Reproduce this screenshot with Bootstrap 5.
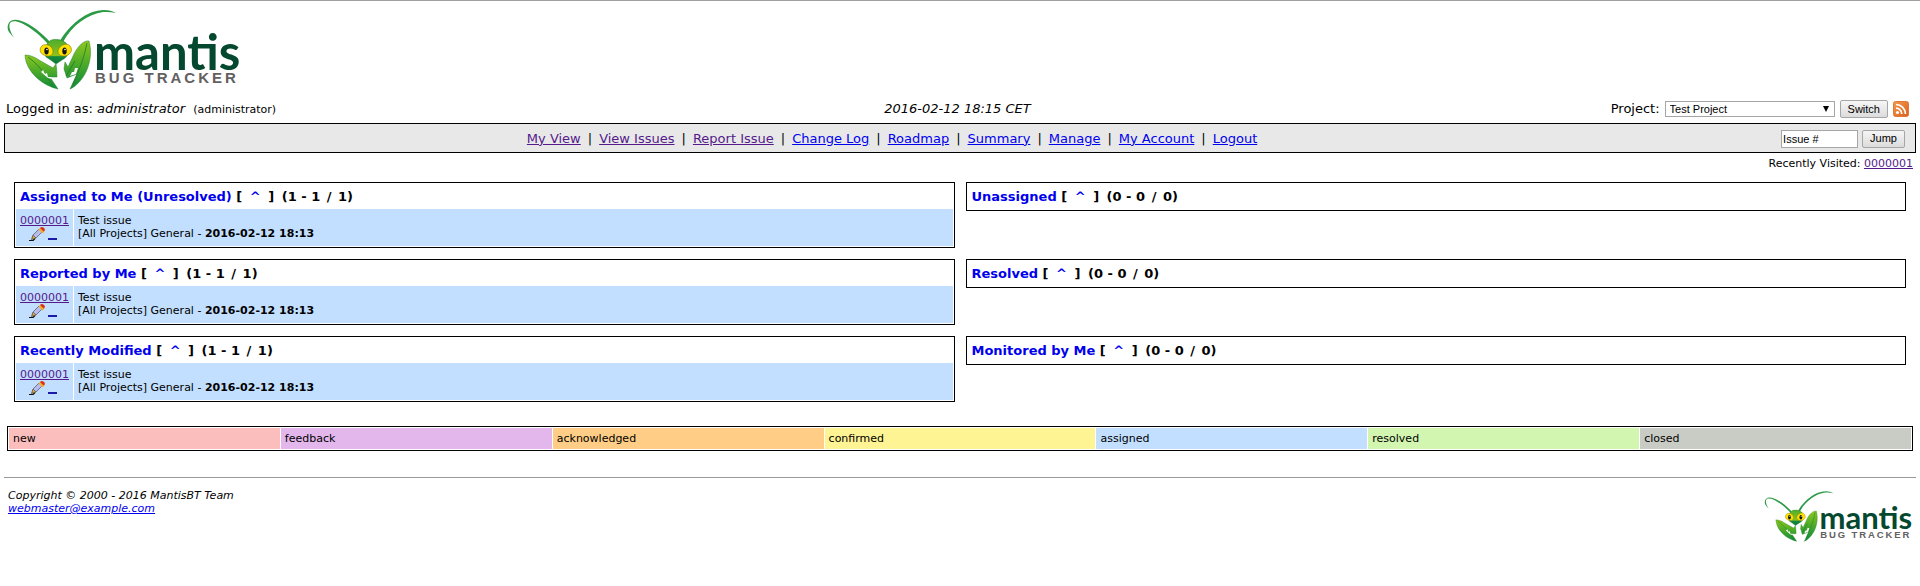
<!DOCTYPE html>
<html lang="en">
<head>
<meta charset="utf-8">
<meta name="viewport" content="width=device-width, initial-scale=1">
<title>My View - MantisBT</title>
<link href="https://cdn.jsdelivr.net/npm/bootstrap@5.3.0/dist/css/bootstrap.min.css" rel="stylesheet">
<style>
body{font-family:Verdana,"DejaVu Sans",sans-serif;font-size:13px;line-height:16px;color:#000;background:#fff;border-top:1px solid #a0a0a0}
a{color:#0000ee}
a.seen{color:#551a8b}
.fine{font-size:11px;line-height:13px}
.page{padding:8px 4px 0}
.logo-main{display:block;width:240px;height:90px;margin:-9px 0 0 -4px}
.logo-foot{display:block;width:152px;height:57px}
.login-row{height:28px;margin-top:5px;padding:0 7px 0 2px}
.login-row>*{flex:1 1 0}
.login-row form{gap:5px}
.ui-control{font-family:"Liberation Sans",Arial,sans-serif;font-size:11px;line-height:13px;color:#000;height:18px}
.ui-button{border:1px solid #a6a6a6;border-radius:2px;background:linear-gradient(#f6f6f6,#dcdcdc);padding:0 7px}
.project-select{width:170px;height:16px;border:1px solid #a6a6a6;appearance:none;padding:0 4px;background:#fff}
.select-wrap{position:relative;display:flex}
.select-wrap svg{position:absolute;right:6px;top:5px;pointer-events:none}
.issue-box{width:77px;border:1px solid #a6a6a6;padding:0 1px}
.issue-box::placeholder{color:#000;opacity:1}
.menu-bar{border:1px solid #000;background:#e8e8e8;height:30px;padding:1px 10px 0}
.menu-bar nav{gap:7px;padding-right:12px}
.recent{padding:4px 3px 0;margin-bottom:12px}
.boxes{display:grid;grid-template-columns:1fr 1fr;gap:11px;padding:0 10px;align-items:start}
.issue-panel{border:1px solid #000;padding:1px}
.issue-panel h2{font-size:13px;line-height:16px;font-weight:bold;margin:0;padding:5px 4px 4px}
.issue-panel h2 a{text-decoration:none}
.issue-panel .jump-up{margin:0 3px}
.issue-panel .count{margin-left:3px}
.issue-panel .of{margin:0 2px}
.issues{width:100%;border-collapse:separate;border-spacing:0}
.issues td{background:#c2dfff;padding:5px 4px 6px;vertical-align:top}
.issues td:first-child{width:58px;border-right:1px solid #fff;text-align:center}
.edit-line{display:flex;height:13px;padding-left:9px;gap:3px}
.flag-link{width:9px;height:13px;border-bottom:2px solid #1a1aa6}
.legend-row{border:1px solid #000;padding:1px;gap:1px;margin:24px 3px 0;background:#fff}
.legend-row li{flex:1 1 0;padding:5px 4px 4px;line-height:12px}
.page-end{border-top:1px solid #999;margin-top:26px;padding:7px 4px 0}
.st-new{background:#fcbdbd}.st-feedback{background:#e3b7eb}.st-ack{background:#ffcd85}.st-conf{background:#fff494}.st-assigned{background:#c2dfff}.st-resolved{background:#d2f5b0}.st-closed{background:#c9ccc4}
.word-a{font:bold 49px Lato,sans-serif;fill:#04492f}
.word-b{font:bold 15px "Liberation Sans",sans-serif;letter-spacing:3px;fill:#626060}
</style>
</head>
<body>
<svg width="0" height="0" class="position-absolute" aria-hidden="true">
<defs>
<linearGradient id="gArm" x1="0" y1="0" x2="0" y2="1"><stop offset="0" stop-color="#8cc81e"/><stop offset=".55" stop-color="#43a62a"/><stop offset="1" stop-color="#0c8a3c"/></linearGradient>
<linearGradient id="gHead" x1="0" y1="0" x2="0" y2="1"><stop offset="0" stop-color="#4fac2c"/><stop offset=".66" stop-color="#8cc41c"/><stop offset=".7" stop-color="#178a3c"/><stop offset="1" stop-color="#0a7a38"/></linearGradient>
<linearGradient id="gRss" x1="0" y1="0" x2="1" y2="1"><stop offset="0" stop-color="#f69a4e"/><stop offset="1" stop-color="#d9601c"/></linearGradient>
<symbol id="mantis" viewBox="0 0 240 90">
<path d="M51 43C42 33 31 24 20 20.500C10 17 5 25 9 32L14 38C10 31 7.500 25 11 22C17 18 36 30 48 44Z" fill="#2b9a45"/>
<path d="M60 41C69 25 87 10 104 10Q111 10 116 13Q110 11.500 103 12C88 14 72 25 63 42Z" fill="#2b9a45"/>
<path d="M25 55C30 55 35 57 39 60L53 68L56 64Q57 71 57 77L50 77L58 89C44 86 26 73 25 55Z" fill="url(#gArm)" stroke="#25802b" stroke-width=".5"/>
<path d="M89 41C84 40 78 46 74 54L68 67L65 62L64 69L67 78L77 74L70 89C82 84 95 63 89 41Z" fill="url(#gArm)" stroke="#25802b" stroke-width=".5"/>
<path d="M28 57Q41 66 53 86M87 43Q84 60 73 84M66 76L75 61" fill="none" stroke="#23782b" stroke-width=".8"/>
<path d="M41 72l2-2 2 4 2-1 1 4 3 0 1 2-4-1ZM70 76l2-4 2 0 1-4 3 0-2 6Z" fill="#fff"/>
<path d="M48 43Q50 39 56 39.500Q62 39 66 43L70 50Q67 58 62 60L56 64Q51 60 46 57Q43 48 48 43Z" fill="url(#gHead)" stroke="#237a29" stroke-width=".5"/>
<path d="M41 47C43 43 52 44 53 51C53 55 51 56 48 56C43 56 38 52 41 47Z" fill="#ffe100" stroke="#8a7400" stroke-width=".6"/>
<path d="M70 46C67 42 59 45 58 51C58 55 61 56 64 56C69 56 74 51 70 46Z" fill="#ffe100" stroke="#8a7400" stroke-width=".6"/>
<ellipse cx="46.500" cy="51" rx="2.200" ry="3.600" fill="#151515"/><ellipse cx="64.500" cy="51" rx="2.200" ry="3.600" fill="#151515"/>
<circle cx="47" cy="49.500" r=".8" fill="#fff"/><circle cx="65" cy="49.500" r=".8" fill="#fff"/>
<text x="94" y="70" class="word-a">mantis</text>
<text x="95" y="83" class="word-b">BUG TRACKER</text>
</symbol>
<symbol id="pencil" viewBox="0 0 16 14">
<path d="M0 13.500h4l2-2" stroke="#111" stroke-width="1.200" fill="none"/>
<path d="M2.500 12.500L4 8l3 3Z" fill="#d8ac48" stroke="#4a4020" stroke-width=".7"/>
<path d="M4 8L10 2l3 3L7 11Z" fill="#b9bce8" stroke="#5c5c80" stroke-width=".8"/>
<path d="M9.500 2.500l2-2 4 4-2 2Z" fill="#f0b030"/>
<path d="M11 1Q13-1 15 1Q17 3 14.500 4.500Z" fill="#d8321e"/>
</symbol>
</defs>
</svg>
<div class="page">
<header>
<a href="#" aria-label="Mantis Bug Tracker" class="d-inline-block align-top"><svg class="logo-main"><use href="#mantis"/></svg></a>
<div class="login-row d-flex align-items-center">
<div>Logged in as: <i>administrator</i> <span class="fine ms-1">(administrator)</span></div>
<div class="text-center fst-italic">2016-02-12 18:15 CET</div>
<form class="d-flex align-items-center justify-content-end">
<label for="project">Project:</label>
<span class="select-wrap"><select id="project" class="ui-control project-select"><option>Test Project</option></select><svg width="6" height="6" viewBox="0 0 6 6"><path d="M0 0h6L3 6Z"/></svg></span>
<button type="button" class="ui-control ui-button">Switch</button>
<a href="#" aria-label="RSS"><svg class="d-block" width="16" height="16" viewBox="0 0 16 16"><rect x=".5" y=".5" width="15" height="15" rx="2" fill="url(#gRss)" stroke="#e07a3c"/><circle cx="4.500" cy="11.500" r="1.600" fill="#fff"/><path d="M3 7.200a5.800 5.800 0 0 1 5.800 5.800M3 3.500a9.500 9.500 0 0 1 9.500 9.500" fill="none" stroke="#fff" stroke-width="1.700"/></svg></a>
</form>
</div>
<div class="menu-bar d-flex align-items-center">
<nav class="d-flex flex-grow-1 justify-content-center"><a href="#" class="seen">My View</a><span>|</span><a href="#" class="seen">View Issues</a><span>|</span><a href="#" class="seen">Report Issue</a><span>|</span><a href="#">Change Log</a><span>|</span><a href="#">Roadmap</a><span>|</span><a href="#">Summary</a><span>|</span><a href="#">Manage</a><span>|</span><a href="#">My Account</a><span>|</span><a href="#">Logout</a></nav>
<form class="d-flex justify-content-end"><input type="text" class="ui-control issue-box" placeholder="Issue #" aria-label="Issue #"><button type="button" class="ui-control ui-button ms-1">Jump</button></form>
</div>
<div class="recent fine text-end">Recently Visited: <a href="#" class="seen">0000001</a></div>
</header>
<main>
<div class="boxes">
<section class="issue-panel"><h2><a href="#">Assigned to Me (Unresolved)</a> [ <a href="#" class="jump-up">^</a> ] <span class="count">(1 - 1 <span class="of">/</span> 1)</span></h2>
<table class="issues fine"><tr><td><a href="#" class="seen">0000001</a><div class="edit-line"><a href="#" aria-label="Edit"><svg class="d-block" width="16" height="14"><use href="#pencil"/></svg></a><a href="#" class="flag-link" aria-label="Priority"></a></div></td><td>Test issue<br>[All Projects] General - <b>2016-02-12 18:13</b></td></tr></table></section>
<section class="issue-panel"><h2><a href="#">Unassigned</a> [ <a href="#" class="jump-up">^</a> ] <span class="count">(0 - 0 <span class="of">/</span> 0)</span></h2></section>
<section class="issue-panel"><h2><a href="#">Reported by Me</a> [ <a href="#" class="jump-up">^</a> ] <span class="count">(1 - 1 <span class="of">/</span> 1)</span></h2>
<table class="issues fine"><tr><td><a href="#" class="seen">0000001</a><div class="edit-line"><a href="#" aria-label="Edit"><svg class="d-block" width="16" height="14"><use href="#pencil"/></svg></a><a href="#" class="flag-link" aria-label="Priority"></a></div></td><td>Test issue<br>[All Projects] General - <b>2016-02-12 18:13</b></td></tr></table></section>
<section class="issue-panel"><h2><a href="#">Resolved</a> [ <a href="#" class="jump-up">^</a> ] <span class="count">(0 - 0 <span class="of">/</span> 0)</span></h2></section>
<section class="issue-panel"><h2><a href="#">Recently Modified</a> [ <a href="#" class="jump-up">^</a> ] <span class="count">(1 - 1 <span class="of">/</span> 1)</span></h2>
<table class="issues fine"><tr><td><a href="#" class="seen">0000001</a><div class="edit-line"><a href="#" aria-label="Edit"><svg class="d-block" width="16" height="14"><use href="#pencil"/></svg></a><a href="#" class="flag-link" aria-label="Priority"></a></div></td><td>Test issue<br>[All Projects] General - <b>2016-02-12 18:13</b></td></tr></table></section>
<section class="issue-panel"><h2><a href="#">Monitored by Me</a> [ <a href="#" class="jump-up">^</a> ] <span class="count">(0 - 0 <span class="of">/</span> 0)</span></h2></section>
</div>
<ul class="legend-row fine d-flex list-unstyled"><li class="st-new">new</li><li class="st-feedback">feedback</li><li class="st-ack">acknowledged</li><li class="st-conf">confirmed</li><li class="st-assigned">assigned</li><li class="st-resolved">resolved</li><li class="st-closed">closed</li></ul>
</main>
<footer class="page-end d-flex justify-content-between align-items-start">
<address class="fine fst-italic mt-1 mb-0">Copyright © 2000 - 2016 MantisBT Team<br><a href="#">webmaster@example.com</a></address>
<a href="#" aria-label="Mantis Bug Tracker"><svg class="logo-foot"><use href="#mantis"/></svg></a>
</footer>
</div>
<script src="https://cdn.jsdelivr.net/npm/bootstrap@5.3.0/dist/js/bootstrap.bundle.min.js"></script>
</body>
</html>
